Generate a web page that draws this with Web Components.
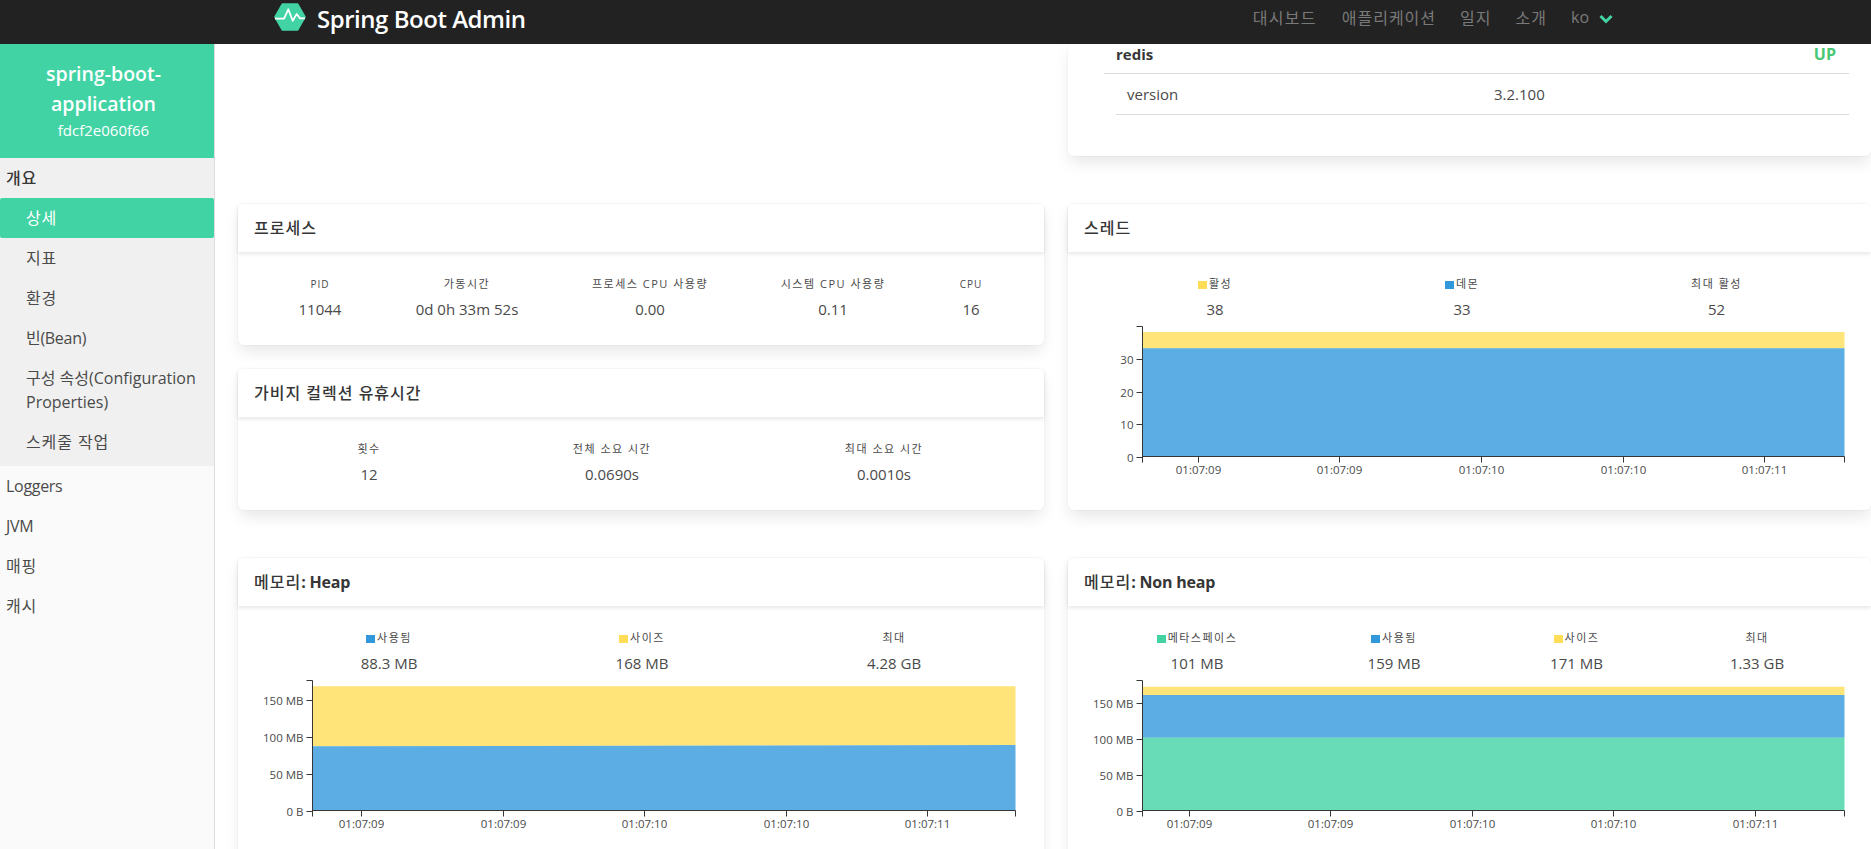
<!DOCTYPE html>
<html lang="ko">
<head>
<meta charset="utf-8">
<title>Spring Boot Admin</title>
<style>
  html, body { margin: 0; height: 100%; overflow: hidden; background: #fff; }
  body {
    font-family: "Open Sans", "Noto Sans CJK KR", sans-serif;
    font-size: 16px;
    color: #4a4a4a;
  }
</style>
</head>
<body>
<sba-app>
  <sba-navbar slot="top"></sba-navbar>
  <sba-sidebar slot="side"></sba-sidebar>
  <sba-details slot="main"></sba-details>
</sba-app>

<script>
class SbaApp extends HTMLElement {
  constructor() {
    super();
    this.attachShadow({ mode: "open" }).innerHTML = `
      <style>
        :host { display: flex; flex-direction: column; height: 849px; overflow: hidden; }
        .body { display: flex; flex: 1; min-height: 0; }
      </style>
      <slot name="top"></slot>
      <div class="body">
        <slot name="side"></slot>
        <slot name="main"></slot>
      </div>`;
  }
}

class SbaNavbar extends HTMLElement {
  constructor() {
    super();
    this.attachShadow({ mode: "open" }).innerHTML = `
      <style>
        :host {
          display: flex; align-items: flex-start; height: 44px; flex: none;
          padding: 3px 258px 0 274px; background: #222; box-sizing: border-box;
        }
        svg.logo { width: 32px; height: 28px; flex: none; }
        .brand {
          margin-left: 11px; color: #fff; font-size: 24px; font-weight: 600;
          line-height: 32px; letter-spacing: -.47px; white-space: nowrap;
        }
        nav { margin-left: auto; display: flex; gap: 24px; align-items: center; height: 28px; color: #7a7a7a; font-size: 16px; letter-spacing: 1px; }
        nav span { white-space: nowrap; }
        nav span:first-child { letter-spacing: 1.3px; margin-right: 1px; }
        .lang { display: flex; align-items: center; gap: 10px; letter-spacing: 0; }
        .lang svg { width: 14px; height: 10px; margin-top: 3px; }
      </style>
      <svg class="logo" viewBox="0 0 32 28">
        <path d="M8.5 1.2H23.5L30.8 14L23.5 26.8H8.5L1.2 14Z" fill="#42d3a5" stroke="#42d3a5" stroke-width="2" stroke-linejoin="round"/>
        <path d="M1 15.6H10L14.3 6.3L18.7 17.7L22.7 11L26 15.4H31" fill="none" stroke="#fff" stroke-width="1.8" stroke-linejoin="round"/>
      </svg>
      <span class="brand">Spring Boot Admin</span>
      <nav>
        <span>대시보드</span>
        <span>애플리케이션</span>
        <span>일지</span>
        <span>소개</span>
        <span class="lang">ko
          <svg viewBox="0 0 14 10"><path d="M1.5 2L7 7.5L12.5 2" fill="none" stroke="#42d3a5" stroke-width="3"/></svg>
        </span>
      </nav>`;
  }
}

class SbaNavItem extends HTMLElement {
  constructor() {
    super();
    this.attachShadow({ mode: "open" }).innerHTML = `
      <style>
        :host { display: block; padding: 8px 6px; line-height: 24px; color: #4a4a4a; letter-spacing: -.3px; }
        :host([ko]) { letter-spacing: .9px; }
        :host([sub]) { padding-left: 26px; padding-right: 8px; }
        :host([group]) { color: #363636; font-weight: 500; }
        :host([active]) { background: #42d3a5; color: #fff; border-radius: 2px; }
      </style>
      <slot></slot>`;
  }
}

class SbaSidebar extends HTMLElement {
  constructor() {
    super();
    this.attachShadow({ mode: "open" }).innerHTML = `
      <style>
        :host {
          display: block; width: 215px; flex: none; box-sizing: border-box;
          background: #fafafa; border-right: 1px solid #ddd;
        }
        header {
          background: #42d3a5; color: #fff; text-align: center; height: 114px;
          box-sizing: border-box; padding: 15px 7px 0 0;
        }
        .name { font-size: 19.5px; font-weight: 600; line-height: 30px; padding: 0 12px; }
        .id { line-height: 24px; font-size: 15px; margin-top: -1px; }
        .group { background: #f0f0f0; padding-bottom: 4px; }
      </style>
      <header>
        <div class="name">spring-boot-application</div>
        <div class="id">fdcf2e060f66</div>
      </header>
      <div class="group">
        <sba-nav-item ko group>개요</sba-nav-item>
        <sba-nav-item ko sub active>상세</sba-nav-item>
        <sba-nav-item ko sub>지표</sba-nav-item>
        <sba-nav-item ko sub>환경</sba-nav-item>
        <sba-nav-item sub>빈(Bean)</sba-nav-item>
        <sba-nav-item sub style="letter-spacing:0">구성 속성(Configuration Properties)</sba-nav-item>
        <sba-nav-item ko sub>스케줄 작업</sba-nav-item>
      </div>
      <sba-nav-item>Loggers</sba-nav-item>
      <sba-nav-item>JVM</sba-nav-item>
      <sba-nav-item ko>매핑</sba-nav-item>
      <sba-nav-item ko>캐시</sba-nav-item>`;
  }
}

class SbaCard extends HTMLElement {
  constructor() {
    super();
    const hasTitle = this.querySelector('[slot="title"]');
    this.attachShadow({ mode: "open" }).innerHTML = `
      <style>
        :host {
          display: block; background: #fff; border-radius: 6px; color: #4a4a4a;
          box-shadow: 0 8px 16px -2px rgba(10,10,10,.1), 0 0 0 1px rgba(10,10,10,.02);
        }
        :host([cut]) { border-radius: 0 0 6px 6px; }
        header {
          height: 48px; box-sizing: border-box; padding: 12px 16px; line-height: 24px;
          color: #363636; font-weight: 500; letter-spacing: 1px;
          box-shadow: 0 2px 4px rgba(10,10,10,.1);
        }
        .content { padding: 24px; }
        :host([cut]) .content { padding: 0 22px 41px 36px; }
      </style>
      ${hasTitle ? `<header><slot name="title"></slot></header>` : ""}
      <div class="content"><slot></slot></div>`;
  }
}

class SbaLevel extends HTMLElement {
  constructor() {
    super();
    this.attachShadow({ mode: "open" }).innerHTML = `
      <style>
        :host { display: grid; grid-template-columns: var(--cols); text-align: center; }
      </style>
      <slot></slot>`;
    this.style.setProperty("--cols", this.getAttribute("cols"));
  }
}

class SbaStat extends HTMLElement {
  constructor() {
    super();
    const color = this.getAttribute("color");
    const label = this.getAttribute("label");
    const ko = /[가-힣]/.test(label) ? " ko" : "";
    this.attachShadow({ mode: "open" }).innerHTML = `
      <style>
        :host { display: block; text-align: center; }
        .label { font-size: 10px; line-height: 16px; letter-spacing: 1px; margin-bottom: 5px; color: #4a4a4a; white-space: nowrap; }
        .label.ko { font-size: 11px; letter-spacing: 1.5px; }
        .dot { display: inline-block; width: 9px; height: 8px; margin-right: 2px; vertical-align: -0.5px; }
        .value { line-height: 24px; font-size: 15px; color: #4a4a4a; white-space: nowrap; }
      </style>
      <div class="label${ko}">${color ? `<span class="dot" style="background:${color}"></span>` : ""}${label}</div>
      <div class="value">${this.getAttribute("value")}</div>`;
  }
}

// stacked area chart, d3 style axes. all coordinates are px inside the card content
class SbaChart extends HTMLElement {
  constructor() {
    super();
    this.attachShadow({ mode: "open" });
  }
  connectedCallback() {
    const d = JSON.parse(this.getAttribute("data"));
    const left = 50.5, top = 5.5, bottom = 135.5, right = left + d.width;
    const y = v => bottom - v * d.scale;
    // every area is only its own band, down to the top of the next one
    const areas = d.areas.map((a, i) => {
      const next = d.areas[i + 1];
      const b0 = next ? y(next.from) : bottom, b1 = next ? y(next.to) : bottom;
      return `<path d="M${left} ${b0}V${y(a.from)}L${right} ${y(a.to)}V${b1}Z" fill="${a.color}" fill-opacity=".8"/>`;
    }).join("");
    const yTicks = d.yTicks.map(t => {
      const py = Math.round(y(t.v)) + .5;
      return `<path d="M${left - 6} ${py}H${left}" stroke="#363636"/><text x="${left - 9}" y="${py + 4}" text-anchor="end">${t.label}</text>`;
    }).join("");
    const xTicks = d.xTicks.map(t => {
      return `<path d="M${t.x + .5} ${bottom}V${bottom + 6}" stroke="#363636"/><text x="${t.x + .5}" y="${bottom + 17}" text-anchor="middle">${t.label}</text>`;
    }).join("");
    this.shadowRoot.innerHTML = `
      <style>
        :host { display: block; }
        svg { display: block; width: 100%; height: 165px; }
        text { font-size: 11.5px; fill: #4a4a4a; }
      </style>
      <svg>
        ${areas}
        <path d="M${left - 6} ${top}H${left}V${bottom + 6}M${left} ${bottom}H${right}M${right} ${bottom}V${bottom + 6}" fill="none" stroke="#363636"/>
        ${yTicks}${xTicks}
      </svg>`;
  }
}

class SbaHealth extends HTMLElement {
  constructor() {
    super();
    this.attachShadow({ mode: "open" }).innerHTML = `
      <style>
        :host { display: block; }
        .row { display: flex; align-items: center; border-bottom: 1px solid #dbdbdb; box-sizing: content-box; }
        .head { height: 19px; padding: 0 13px 10px 12px; justify-content: space-between; font-weight: 700; color: #363636; font-size: 15px; }
        .up { color: #48c774; font-size: 16px; }
        .line { height: 40px; margin-left: 12px; padding-left: 11px; color: #4a4a4a; font-size: 15px; }
        .key { width: 367px; }
      </style>
      <div class="row head"><span>redis</span><span class="up">UP</span></div>
      <div class="row line"><span class="key">version</span><span>3.2.100</span></div>`;
  }
}

class SbaDetails extends HTMLElement {
  constructor() {
    super();
    const fmt = ["01:07:09", "01:07:09", "01:07:10", "01:07:10", "01:07:11"];
    const ticks = xs => xs.map((x, i) => ({ x, label: fmt[i] }));
    const mem = [{ v: 0, label: "0 B" }, { v: 50, label: "50 MB" }, { v: 100, label: "100 MB" }, { v: 150, label: "150 MB" }];
    const threads = {
      width: 702, scale: 3.25,
      yTicks: [0, 10, 20, 30].map(v => ({ v, label: v })),
      xTicks: ticks([106, 247, 389, 531, 672]),
      areas: [
        { from: 38.3, to: 38.3, color: "#ffdd57" },
        { from: 33.3, to: 33.3, color: "#3298dc" }
      ]
    };
    const heap = {
      width: 703, scale: .7347,
      yTicks: mem,
      xTicks: ticks([99, 241, 382, 524, 665]),
      areas: [
        { from: 169, to: 169, color: "#ffdd57" },
        { from: 87.5, to: 89, color: "#3298dc" }
      ]
    };
    const nonHeap = {
      width: 702, scale: .72,
      yTicks: mem,
      xTicks: ticks([97, 238, 380, 521, 663]),
      areas: [
        { from: 172, to: 172, color: "#ffdd57" },
        { from: 160.5, to: 160.5, color: "#3298dc" },
        { from: 101, to: 101, color: "#42d3a5" }
      ]
    };
    const json = o => JSON.stringify(o).replace(/"/g, "&quot;");
    this.attachShadow({ mode: "open" }).innerHTML = `
      <style>
        :host {
          display: grid; flex: 1; min-width: 0; align-content: start;
          grid-template-columns: 806px 803px; column-gap: 24px; row-gap: 48px;
          padding-left: 23px; overflow: hidden;
        }
        .stack { display: flex; flex-direction: column; gap: 24px; }
        .stack sba-card:last-child { flex: 1; }
        .top { grid-column: 2; }
        b { letter-spacing: -.2px; }
      </style>
      <div class="top">
        <sba-card cut><sba-health></sba-health></sba-card>
      </div>
      <div class="stack" style="grid-column:1">
        <sba-card>
          <span slot="title">프로세스</span>
          <sba-level cols="116fr 178fr 188fr 178fr 98fr">
            <sba-stat label="PID" value="11044"></sba-stat>
            <sba-stat label="가동시간" value="0d 0h 33m 52s"></sba-stat>
            <sba-stat label="프로세스 CPU 사용량" value="0.00"></sba-stat>
            <sba-stat label="시스템 CPU 사용량" value="0.11"></sba-stat>
            <sba-stat label="CPU" value="16"></sba-stat>
          </sba-level>
        </sba-card>
        <sba-card>
          <span slot="title">가비지 컬렉션 유휴시간</span>
          <sba-level cols="214fr 272fr 272fr">
            <sba-stat label="횟수" value="12"></sba-stat>
            <sba-stat label="전체 소요 시간" value="0.0690s"></sba-stat>
            <sba-stat label="최대 소요 시간" value="0.0010s"></sba-stat>
          </sba-level>
        </sba-card>
      </div>
      <sba-card>
        <span slot="title">스레드</span>
        <sba-level cols="246fr 248fr 261fr">
          <sba-stat label="활성" value="38" color="#ffdd57"></sba-stat>
          <sba-stat label="데몬" value="33" color="#3298dc"></sba-stat>
          <sba-stat label="최대 활성" value="52"></sba-stat>
        </sba-level>
        <sba-chart data="${json(threads)}"></sba-chart>
      </sba-card>
      <sba-card>
        <span slot="title">메모리<b>: Heap</b></span>
        <sba-level cols="254fr 252fr 252fr">
          <sba-stat label="사용됨" value="88.3 MB" color="#3298dc"></sba-stat>
          <sba-stat label="사이즈" value="168 MB" color="#ffdd57"></sba-stat>
          <sba-stat label="최대" value="4.28 GB"></sba-stat>
        </sba-level>
        <sba-chart data="${json(heap)}"></sba-chart>
      </sba-card>
      <sba-card>
        <span slot="title">메모리<b>: Non heap</b></span>
        <sba-level cols="210fr 184fr 181fr 180fr">
          <sba-stat label="메타스페이스" value="101 MB" color="#42d3a5"></sba-stat>
          <sba-stat label="사용됨" value="159 MB" color="#3298dc"></sba-stat>
          <sba-stat label="사이즈" value="171 MB" color="#ffdd57"></sba-stat>
          <sba-stat label="최대" value="1.33 GB"></sba-stat>
        </sba-level>
        <sba-chart data="${json(nonHeap)}"></sba-chart>
      </sba-card>`;
  }
}

customElements.define("sba-app", SbaApp);
customElements.define("sba-navbar", SbaNavbar);
customElements.define("sba-nav-item", SbaNavItem);
customElements.define("sba-sidebar", SbaSidebar);
customElements.define("sba-card", SbaCard);
customElements.define("sba-level", SbaLevel);
customElements.define("sba-stat", SbaStat);
customElements.define("sba-chart", SbaChart);
customElements.define("sba-health", SbaHealth);
customElements.define("sba-details", SbaDetails);
</script>
</body>
</html>
